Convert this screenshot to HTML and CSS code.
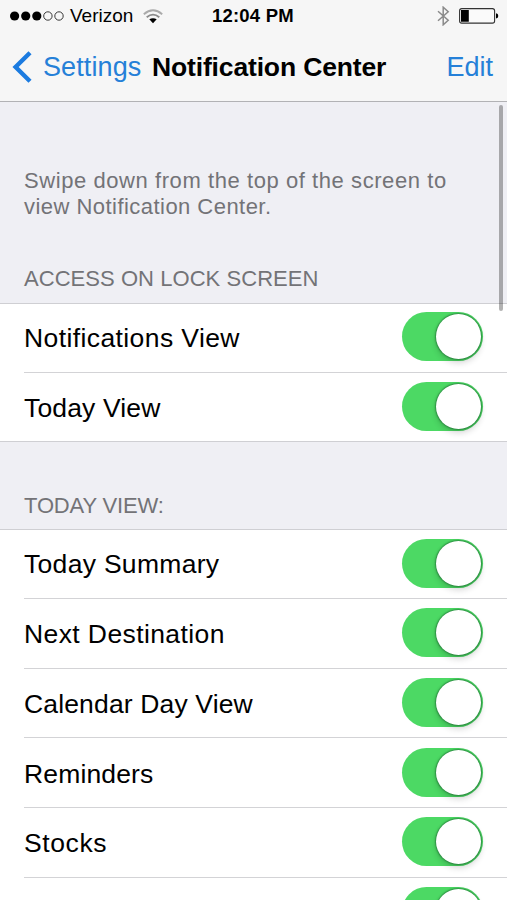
FILE: index.html
```html
<!DOCTYPE html>
<html lang="en">
<head>
<meta charset="utf-8">
<title>Notification Center</title>
<link rel="stylesheet" href="styles.css">
</head>
<body>
<header class="top">
  <div class="status">
    <div class="carrier">
      <svg class="signal" width="54" height="12" viewBox="0 0 54 12"><g fill="#000"><circle cx="4.6" cy="6" r="4.6"/><circle cx="15.7" cy="6" r="4.6"/><circle cx="26.8" cy="6" r="4.6"/></g><g fill="none" stroke="#222" stroke-width=".9"><circle cx="37.9" cy="6" r="4.2"/><circle cx="49" cy="6" r="4.2"/></g></svg>
      <span class="carrier-name">Verizon</span>
      <svg class="wifi" width="20" height="15" viewBox="0 0 20 15"><g fill="none" stroke-width="1.8"><path stroke="#aaa" d="M.8 5.2Q10-2.7 19.2 5.2"/><path stroke="#8b8b8b" d="M3.7 8.3Q10 2.9 16.3 8.3"/></g><path d="M6.3 10.3Q10 8 13.7 10.3L10 14.2Z"/></svg>
    </div>
    <span class="time">12:04 PM</span>
    <div class="power">
      <svg width="13" height="20" viewBox="0 0 13 20"><path d="M1 5.2 11.2 14.3 6.2 18.8V1.2L11.2 5.7 1 14.8" fill="none" stroke="#8a8a8a" stroke-width="1.5"/></svg>
      <svg width="40" height="16" viewBox="0 0 40 16"><rect x=".6" y=".6" width="35" height="14.5" rx="2.2" fill="#fafafa" stroke="#333" stroke-width="1.1"/><path d="M2 2H9.8V13.7H2ZM37 5.2Q39.3 5.6 39.3 7.9T37 10.6Z"/></svg>
    </div>
  </div>
  <nav class="nav">
    <a class="back"><svg width="20" height="32" viewBox="0 0 20 32"><path d="M18 1.8 3.6 16 18 30.2" fill="none" stroke="#1b7be0" stroke-width="4.4"/></svg><span class="back-label">Settings</span></a>
    <h1 class="title">Notification Center</h1>
    <a class="edit">Edit</a>
  </nav>
</header>
<main class="content">
  <p class="hint">Swipe down from the top of the screen to<br><span class="hint-end">view Notification Center.</span></p>
  <h2 class="heading lock">ACCESS ON LOCK SCREEN</h2>
  <ul class="list">
    <li class="row"><span>Notifications View</span><i class="toggle"></i></li>
    <li class="row"><span class="snug">Today View</span><i class="toggle"></i></li>
  </ul>
  <h2 class="heading today">TODAY VIEW:</h2>
  <ul class="list">
    <li class="row"><span class="mid">Today Summary</span><i class="toggle"></i></li>
    <li class="row"><span>Next Destination</span><i class="toggle"></i></li>
    <li class="row"><span class="snug">Calendar Day View</span><i class="toggle"></i></li>
    <li class="row"><span class="snug">Reminders</span><i class="toggle"></i></li>
    <li class="row"><span class="wide">Stocks</span><i class="toggle"></i></li>
    <li class="row"><span></span><i class="toggle"></i></li>
  </ul>
</main>
<div class="scrollbar"></div>
</body>
</html>
```
FILE: styles.css
```css
* { box-sizing: border-box; }
html, body { height: 900px; overflow: hidden; }
body { margin: 0; background: #efeff4; color: #000; font-family: "Liberation Sans", Arial, sans-serif; position: relative; }
svg { display: block; flex: none; }
.top { height: 102px; background: #f6f6f6; border-bottom: 1px solid #b2b2b5; }
.content { height: 798px; overflow: hidden; }
.status { height: 32px; display: grid; grid-template-columns: 212px 1fr auto; align-items: center; padding-right: 8px; white-space: nowrap; }
.carrier { display: flex; align-items: center; padding-left: 10px; }
.carrier-name { font-size: 19px; letter-spacing: 0; margin-left: 6px; width: 67px; }
.wifi { margin-left: 6px; }
.time { font-size: 18.5px; font-weight: 700; letter-spacing: .2px; }
.power { display: flex; align-items: center; gap: 9px; }
.nav { height: 70px; display: grid; grid-template-columns: 152px 1fr auto; align-items: center; padding-right: 14px; font-size: 27px; white-space: nowrap; }
.back { display: flex; align-items: center; padding-left: 12px; color: #2580d8; letter-spacing: .1px; }
.back-label { margin-left: 11px; }
.edit { color: #2580d8; }
.title { margin: 0; font-size: 26.5px; letter-spacing: -.15px; }
.hint { margin: 0; padding: 66px 0 0 24px; font-size: 22px; line-height: 26px; letter-spacing: .57px; color: #737377; white-space: nowrap; }
.hint-end { letter-spacing: .46px; }
.heading { margin: 0; padding-left: 24px; display: flex; align-items: flex-end; font-size: 22px; line-height: 26px; font-weight: 400; color: #737377; }
.lock { height: 83px; padding-bottom: 11px; letter-spacing: .05px; }
.today { height: 87px; padding-bottom: 10px; letter-spacing: -.15px; }
.list { margin: 0; padding: 0 0 0 24px; list-style: none; background: #fff; border-top: 1px solid #cfcfd3; border-bottom: 1px solid #cfcfd3; }
.row { height: 69.7px; display: flex; align-items: center; justify-content: space-between; padding: 1px 24px 0 0; font-size: 26.5px; letter-spacing: .4px; border-bottom: 1px solid #d3d3d6; }
.row > span { padding-top: 2px; }
.row:first-child { height: 68.8px; }
.row:first-child > span { padding-top: .6px; }
.row:last-child { height: 68.4px; border-bottom: 0; }
.snug { letter-spacing: .15px; }
.mid { letter-spacing: .3px; }
.wide { letter-spacing: .6px; }
.toggle { width: 81px; height: 49px; border-radius: 25px; background: #4cd964; display: flex; justify-content: flex-end; padding: 2px 2px; margin-top: -2px; }
.row:first-child .toggle { margin-top: -3px; }
.toggle::after { content: ""; width: 45px; height: 45px; border-radius: 50%; background: #fff; box-shadow: 0 0 1.5px 1px rgba(20, 90, 40, .55), 0 4px 6px rgba(0, 0, 0, .16); }
.scrollbar { position: absolute; left: 499px; top: 105px; width: 4px; height: 206px; border-radius: 2px; background: rgba(0, 0, 0, .3); }
```
